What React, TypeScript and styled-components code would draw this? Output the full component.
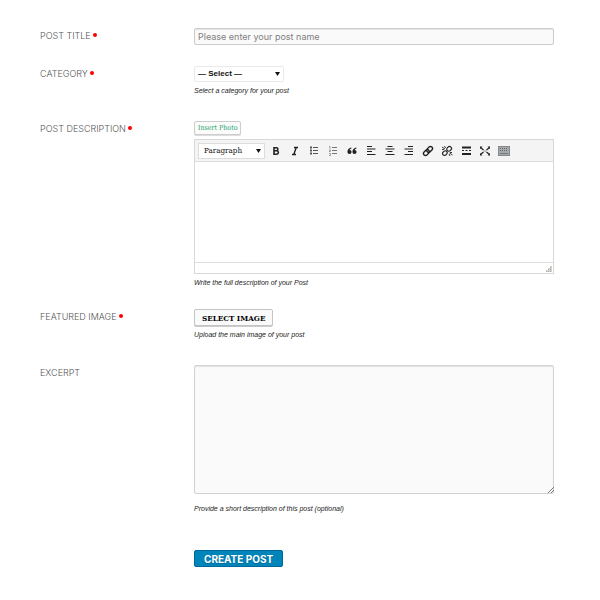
import React from "react";
import styled, { createGlobalStyle } from "styled-components";

const GlobalStyle = createGlobalStyle`
  *, *::before, *::after { box-sizing: border-box; }
  body { margin: 0; background: #fff; color: #222; font-family: "Liberation Sans", Arial, sans-serif; }
  button, input, select, textarea { margin: 0; font: inherit; color: inherit; }
`;

const display = `"Inter", "Open Sans", sans-serif`;
const serif = `"DejaVu Serif Condensed", "DejaVu Serif", serif`;

const Form = styled.form`
  display: flex;
  flex-direction: column;
  padding: 28px 46px 32px 40px;
`;

const Row = styled.div<{ $after: number }>`
  display: grid;
  grid-template-columns: 154px minmax(0, 1fr);
  align-items: start;
  margin-bottom: ${(p) => p.$after}px;
`;

const Label = styled.label`
  padding-top: 1px;
  font: 300 9px/14px ${display};
  color: #555;
  white-space: nowrap;
`;

const Star = styled.span`
  display: inline-block;
  width: 4px;
  height: 4px;
  margin-left: 2px;
  border-radius: 2px;
  background: #f00;
  vertical-align: 2px;
`;

const Field = styled.div`
  display: flex;
  flex-direction: column;
  align-items: flex-start;
`;

const TextInput = styled.input`
  width: 100%;
  height: 17px;
  padding: 0 3px;
  border: 1px solid #ccc;
  border-radius: 2px;
  background: #fafafa;
  box-shadow: inset 0 1px 1px #e4e4e4;
  font: 400 9px/14px ${display};
  &::placeholder { color: #808080; opacity: 1; }
`;

const SelectWrap = styled.div<{ $width: number }>`
  position: relative;
  flex: none;
  width: ${(p) => p.$width}px;
`;

const Select = styled.select<{ $serif?: boolean }>`
  display: block;
  appearance: none;
  width: 100%;
  height: 16px;
  padding: 0 0 0 ${(p) => (p.$serif ? 5 : 3)}px;
  border: 1px solid ${(p) => (p.$serif ? "#ddd" : "#eaeaea")};
  border-radius: ${(p) => (p.$serif ? 0 : 2)}px;
  background: #fff;
  color: #111;
  font: ${(p) => (p.$serif ? `400 8px/14px ${serif}` : `700 8px/14px "Liberation Sans", Arial, sans-serif`)};
`;

const Arrow = styled.svg`
  position: absolute;
  top: 6px;
  right: 4px;
  width: 5px;
  height: 4px;
  pointer-events: none;
`;

const Hint = styled.p<{ $gap?: number }>`
  margin: ${(p) => p.$gap ?? 2}px 0 0;
  font: italic 400 7px/14px "Liberation Sans", Arial, sans-serif;
  color: #222;
`;

const PhotoButton = styled.button`
  height: 14px;
  padding: 0 3px;
  border: 1px solid #ccc;
  border-radius: 2px;
  background: #fbfbfb;
  box-shadow: 0 1px 0 #ddd;
  color: #1aa566;
  font: 400 7px/11px ${serif};
`;

const ImageButton = styled.button`
  height: 17px;
  padding: 0 7px;
  border: 1px solid #c4c4c4;
  border-radius: 2px;
  background: #fafafa;
  box-shadow: 0 1px 0 #ccc;
  color: #000;
  font: 700 8px/14px ${serif};
`;

const SubmitButton = styled.button`
  height: 17px;
  padding: 0 9px;
  border: 1px solid #006799;
  border-radius: 2px;
  background: #0085ba;
  color: #fff;
  font: 700 10px/14px ${display};
  text-shadow: 0 1px 1px #006799;
`;

const Editor = styled.div`
  width: 100%;
  margin-top: 4px;
  border: 1px solid #d8d8d8;
`;

const Toolbar = styled.div`
  display: flex;
  align-items: center;
  height: 22px;
  padding: 0 3px;
  border-bottom: 1px solid #ddd;
  background: #f4f4f4;
`;

const Tool = styled.button`
  display: flex;
  flex: none;
  align-items: center;
  justify-content: flex-start;
  width: 19px;
  height: 16px;
  padding: 0 0 0 3px;
  border: 0;
  background: none;
  color: #222;
  &:first-of-type { margin-left: 2px; }
`;

const Icon = styled.svg`
  flex: none;
  width: 12px;
  height: 12px;
  fill: none;
  stroke: currentColor;
`;

const EditorText = styled.textarea`
  display: block;
  width: 100%;
  height: 100px;
  padding: 5px;
  border: 0;
  background: #fff;
  font-size: 9px;
  resize: none;
`;

const StatusBar = styled.div`
  display: flex;
  align-items: flex-end;
  justify-content: flex-end;
  height: 11px;
  padding: 1px;
  border-top: 1px solid #ddd;
`;

const Grip = styled.svg`
  width: 6px;
  height: 6px;
`;

const ExcerptWrap = styled.div`
  position: relative;
  width: 100%;
  & > ${Grip} { position: absolute; right: 0; bottom: 1px; pointer-events: none; }
`;

const Excerpt = styled.textarea`
  display: block;
  width: 100%;
  height: 129px;
  padding: 4px;
  border: 1px solid #d2d2d2;
  border-radius: 2px;
  background: #fafafa;
  box-shadow: inset 0 1px 1px #e4e4e4;
  font-size: 9px;
  resize: none;
`;

const DropArrow = () => (
  <Arrow viewBox="0 0 5 4" aria-hidden="true">
    <path d="M0 0h5L2.5 4z" fill="#111" />
  </Arrow>
);

const ResizeGrip = () => (
  <Grip viewBox="0 0 6 6" aria-hidden="true">
    <path d="M0 6L6 0M3 6L6 3" stroke="#777" />
  </Grip>
);

const DottedGrip = () => (
  <Grip viewBox="0 0 6 6" aria-hidden="true">
    <path d="M4 0h2v6H0V4h2V2h2z" fill="#d4d4cc" />
    <path d="M0 5.5h6M2 3.5h4M4 1.5h2" stroke="#aaa" strokeDasharray="1 1" />
  </Grip>
);

const tools: { name: string; art: React.ReactNode }[] = [
  {
    name: "Bold",
    art: <path d="M4 2.8v6.4M3.2 2.8h3.2a1.5 1.5 0 0 1 0 3H4.2h2.5a1.7 1.7 0 0 1 0 3.4H3.2" strokeWidth="1.6" />,
  },
  { name: "Italic", art: <path d="M5 2.5h4M3 9.5h4M7.2 2.5L4.8 9.5" strokeWidth="1.4" /> },
  {
    name: "Bulleted list",
    art: (
      <g stroke="#555">
        <path d="M2 2.5h2M2 5.5h2M2 8.5h2" strokeWidth="2" />
        <path d="M5 2.5h5M5 5.5h5M5 8.5h5" />
      </g>
    ),
  },
  {
    name: "Numbered list",
    art: (
      <g stroke="#888">
        <path d="M2 1.5h1v3M2 5.5h1.5v1H2M2 8.5h1.5v2H2" strokeWidth="0.8" />
        <path d="M5 2.5h5M5 5.5h5M5 8.5h5" stroke="#777" />
      </g>
    ),
  },
  {
    name: "Blockquote",
    art: (
      <g fill="currentColor" stroke="none">
        <path d="M5.4 2.6C3 2.8 1.4 4.6 1.4 7a2.1 2.1 0 1 0 2.2-2.1c.3-.7 1-1.2 1.8-1.3z" />
        <path d="M10.4 2.6C8 2.8 6.4 4.6 6.4 7a2.1 2.1 0 1 0 2.2-2.1c.3-.7 1-1.2 1.8-1.3z" />
      </g>
    ),
  },
  { name: "Align left", art: <path d="M2 1.5h5M2 4h8.500M2 6.500h5M2 9.500h8.500" strokeWidth="1.2" /> },
  { name: "Align center", art: <path d="M3.500 1.500h5M1.500 4h9M3.500 6.500h5M1.500 9.500h9" strokeWidth="1.2" /> },
  { name: "Align right", art: <path d="M5 1.500h5M1.500 4H10M5 6.500h5M1.500 9.500H10" strokeWidth="1.2" /> },
  {
    name: "Insert link",
    art: (
      <g strokeWidth="1.4" transform="rotate(-45 6 6)">
        <rect x="0.5" y="4" width="6.5" height="4" rx="2" />
        <rect x="5" y="4" width="6.5" height="4" rx="2" />
      </g>
    ),
  },
  {
    name: "Remove link",
    art: (
      <g strokeWidth="1.2">
        <g transform="rotate(-45 6 6)">
          <rect x="0.5" y="4" width="5" height="4" rx="2" />
          <rect x="6.5" y="4" width="5" height="4" rx="2" />
        </g>
        <path d="M1 2l3 2M3.5 1l1 2M1 4.500h2M8 9l1 2M8.5 8l3 2M9 7.500h2" strokeWidth="0.9" />
      </g>
    ),
  },
  {
    name: "Read more",
    art: (
      <>
        <path d="M2 2.5h9M2 9h9" strokeWidth="2" />
        <path d="M2 5.5h9" strokeDasharray="2 1.5" strokeWidth="1.2" />
      </>
    ),
  },
  {
    name: "Fullscreen",
    art: (
      <>
        <path d="M1.500 2.500l3 2.500M10.500 2.500L7.500 5M1.500 9.500L4.500 7M10.500 9.500L7.500 7" strokeWidth="1.2" />
        <path d="M1 1.500h2.500L1 4zM11 1.500H8.500L11 4zM1 10.500h2.500L1 8zM11 10.500H8.500L11 8z" fill="currentColor" stroke="none" />
        <path d="M4.500 6h3" stroke="#888" />
      </>
    ),
  },
  {
    name: "Toolbar toggle",
    art: (
      <>
        <rect x="0.5" y="1.5" width="11" height="9" fill="#a4a9ad" stroke="#888" />
        <path d="M2 3.5h8M2 5.500h8" stroke="#666" strokeDasharray="1 1" />
        <path d="M2 8.500h8" stroke="#777" />
      </>
    ),
  },
];

export default function App() {
  return (
    <>
      <GlobalStyle />
      <Form onSubmit={(e) => e.preventDefault()}>
        <Row $after={21}>
          <Label htmlFor="title">POST TITLE<Star /></Label>
          <TextInput id="title" type="text" placeholder="Please enter your post name" />
        </Row>
        <Row $after={23}>
          <Label htmlFor="category">CATEGORY<Star /></Label>
          <Field>
            <SelectWrap $width={90}>
              <Select id="category"><option>— Select —</option></Select>
              <DropArrow />
            </SelectWrap>
            <Hint>Select a category for your post</Hint>
          </Field>
        </Row>
        <Row $after={19}>
          <Label htmlFor="description">POST DESCRIPTION<Star /></Label>
          <Field>
            <PhotoButton type="button">Insert Photo</PhotoButton>
            <Editor>
              <Toolbar role="toolbar" aria-label="Formatting">
                <SelectWrap $width={67}>
                  <Select $serif aria-label="Block format"><option>Paragraph</option></Select>
                  <DropArrow />
                </SelectWrap>
                {tools.map((t) => (
                  <Tool key={t.name} type="button" aria-label={t.name}>
                    <Icon viewBox="0 0 12 12" aria-hidden="true">{t.art}</Icon>
                  </Tool>
                ))}
              </Toolbar>
              <EditorText id="description" />
              <StatusBar><DottedGrip /></StatusBar>
            </Editor>
            <Hint>Write the full description of your Post</Hint>
          </Field>
        </Row>
        <Row $after={23}>
          <Label htmlFor="image">FEATURED IMAGE<Star /></Label>
          <Field>
            <ImageButton id="image" type="button">SELECT IMAGE</ImageButton>
            <Hint>Upload the main image of your post</Hint>
          </Field>
        </Row>
        <Row $after={34}>
          <Label htmlFor="excerpt">EXCERPT</Label>
          <Field>
            <ExcerptWrap>
              <Excerpt id="excerpt" />
              <ResizeGrip />
            </ExcerptWrap>
            <Hint $gap={8}>Provide a short description of this post (optional)</Hint>
          </Field>
        </Row>
        <Row $after={0}>
          <span />
          <Field><SubmitButton type="submit">CREATE POST</SubmitButton></Field>
        </Row>
      </Form>
    </>
  );
}
